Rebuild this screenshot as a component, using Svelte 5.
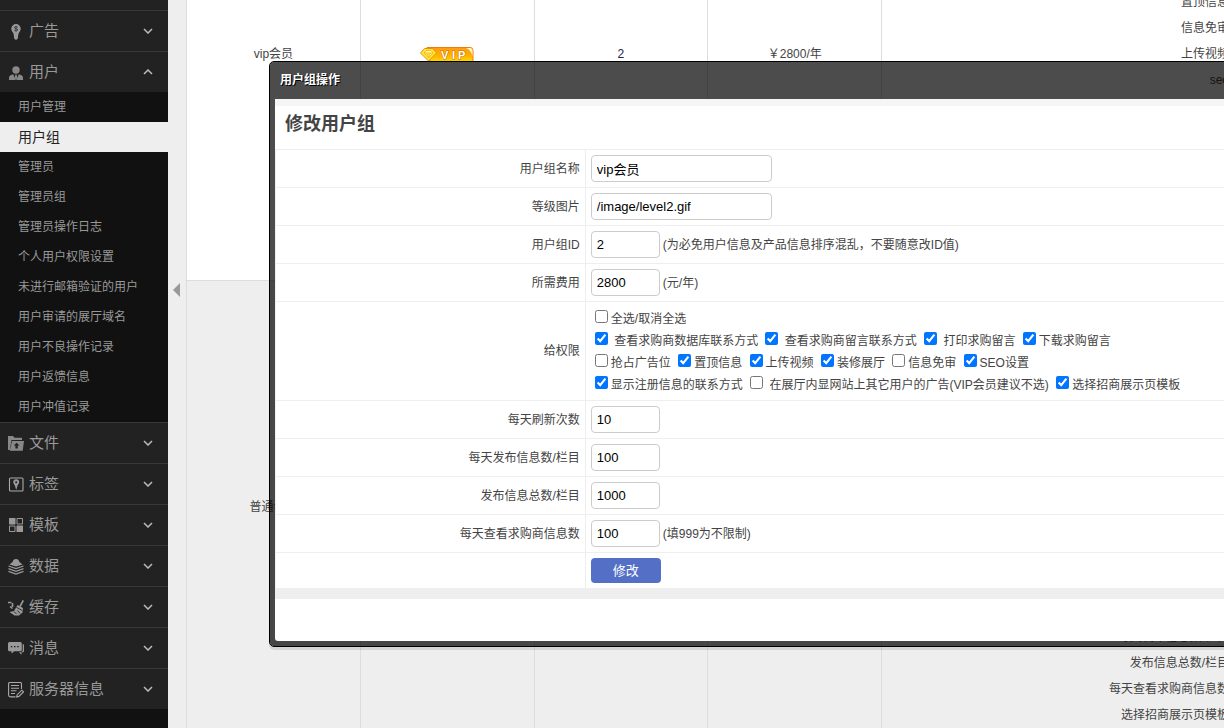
<script>
  const before = [{ name: '广告', icon: 'ad' }];
  const after = [
    { name: '文件', icon: 'file' },
    { name: '标签', icon: 'tag' },
    { name: '模板', icon: 'template' },
    { name: '数据', icon: 'data' },
    { name: '缓存', icon: 'cache' },
    { name: '消息', icon: 'message' },
    { name: '服务器信息', icon: 'server' }
  ];
  const userLinks = [
    '用户管理', '用户组', '管理员', '管理员组', '管理员操作日志', '个人用户权限设置',
    '未进行邮箱验证的用户', '用户审请的展厅域名', '用户不良操作记录', '用户返馈信息', '用户冲值记录'
  ];
  const activeLink = '用户组';

  const vipRights = ['置顶信息', '信息免审', '上传视频', 'seo', '装修展厅'];
  const basicRights = ['每天发布信息数/栏目', '发布信息总数/栏目', '每天查看求购商信息数', '选择招商展示页模板'];

  const topFields = [
    { id: 'groupname', label: '用户组名称', value: 'vip会员', wide: true, note: '' },
    { id: 'grouppic', label: '等级图片', value: '/image/level2.gif', wide: true, note: '' },
    { id: 'groupid', label: '用户组ID', value: '2', wide: false, note: '(为必免用户信息及产品信息排序混乱，不要随意改ID值)' },
    { id: 'rmb', label: '所需费用', value: '2800', wide: false, note: '(元/年)' }
  ];
  const bottomFields = [
    { id: 'refresh', label: '每天刷新次数', value: '10', wide: false, note: '' },
    { id: 'addinfo', label: '每天发布信息数/栏目', value: '100', wide: false, note: '' },
    { id: 'addtotal', label: '发布信息总数/栏目', value: '1000', wide: false, note: '' },
    { id: 'looked', label: '每天查看求购商信息数', value: '100', wide: false, note: '(填999为不限制)' }
  ];
  const rights = [
    [{ text: '全选/取消全选', on: false }],
    [
      { text: ' 查看求购商数据库联系方式', on: true },
      { text: ' 查看求购商留言联系方式', on: true },
      { text: ' 打印求购留言', on: true },
      { text: '下载求购留言', on: true }
    ],
    [
      { text: '抢占广告位', on: false },
      { text: '置顶信息', on: true },
      { text: '上传视频', on: true },
      { text: '装修展厅', on: true },
      { text: '信息免审', on: false },
      { text: 'SEO设置', on: true }
    ],
    [
      { text: '显示注册信息的联系方式', on: true },
      { text: ' 在展厅内显网站上其它用户的广告(VIP会员建议不选)', on: false },
      { text: '选择招商展示页模板', on: true }
    ]
  ];
</script>

{#snippet glyph(name)}
  <svg class="icon" viewBox="0 0 16 16" aria-hidden="true">
    {#if name === 'ad'}
      <path fill="#999" d="M8 0a4.700 4.700 0 0 0-4.700 4.700c0 2 1.300 3.200 2 4.600.6 1.500.7 3.500.8 5.200L8 16l1.900-1.500c.1-1.700.2-3.700.8-5.200.7-1.400 2-2.600 2-4.600A4.700 4.700 0 0 0 8 0z" />
      <path fill="none" stroke="#333" stroke-width=".9" d="M9.700 3.300C8.800 2.200 6.400 2.500 6.400 3.700c0 1.300 3.300.7 3.300 2.100 0 1.200-2.500 1.400-3.400.3M8 1.800v5.700" />
    {:else if name === 'user'}
      <circle cx="8" cy="5" r="3.700" fill="#888" />
      <path fill="#888" d="M1 15v-2.500c0-2 2.500-2.800 4.200-3.300L7.700 15zM15 15v-2.500c0-2-2.500-2.800-4.200-3.300L8.300 15z" />
      <path fill="#888" d="M7.300 9.500h1.400l.5 3.500L8 15l-1.200-2z" />
    {:else if name === 'file'}
      <path fill="#888" d="M0 0h5l1.500 1.700H14V4H3.500L1.800 14H0z" />
      <path fill="#888" d="M4 5h12l-1.300 9.700H1.800z" />
      <path fill="#222" d="M8.600 6.700l2.900 2.900H9.800v2.900H7.400V9.600H5.700z" />
    {:else if name === 'tag'}
      <rect x="1.500" y="1" width="13.500" height="13" rx="1" fill="none" stroke="#aaa" stroke-width="1.100" />
      <path fill="#999" d="M8.200 2.300a3 3 0 0 0-3 3c0 1.500 1.600 2.500 2 4.400l1 3.300 1-3.300c.4-1.900 2-2.900 2-4.400a3 3 0 0 0-3-3z" />
      <circle cx="8.200" cy="5.200" r="1" fill="#222" />
    {:else if name === 'template'}
      <path fill="#999" d="M1 0h6.500v6.500H1zM8.500 7.500H15V14H8.500z" />
      <path fill="none" stroke="#999" d="M9 .5h5.500V6H9zM1.500 8H7v5.500H1.500z" />
    {:else if name === 'data'}
      <path fill="#999" d="M8 0C5.800 0 4.800 1.500 4.800 2.700L1.500 5.500 8 7.600l6.500-2.100-3.300-2.800C11.200 1.500 10.200 0 8 0z" />
      <path fill="none" stroke="#999" stroke-width="1.300" d="M.5 7L8 9.600 15.500 7M.5 9.700L8 12.300l7.500-2.600M.5 12.400L8 15l7.500-2.600" />
    {:else if name === 'cache'}
      <path fill="none" stroke="#999" stroke-width="1.600" d="M15.300.3L12 6.500M0 2.500h3.500M4.500 3v4M2 6.500l2.500 2" />
      <path fill="#999" d="M9.500 5l5.500 3-.5 4.500L11 15.500H6.500L1.500 12l4.500-1z" />
      <path fill="none" stroke="#222" stroke-width=".9" d="M8.300 7.200l6 3.300M6 11.500l2.500 2.500M9.500 10.500l2.500 3" />
    {:else if name === 'message'}
      <path fill="#999" d="M1.500 1h10.800a1.500 1.500 0 0 1 1.500 1.500v6.300a1.500 1.500 0 0 1-1.500 1.500H6.300L3.500 12.500v-2.200h-2A1.500 1.500 0 0 1 0 8.800V2.500A1.500 1.500 0 0 1 1.500 1z" />
      <path fill="#999" d="M14.700 3c1 0 1.300.7 1.300 1.500v5.300c0 1-.5 1.500-1.500 1.500h-1v2.400l-2.500-2.400H8.500c4 0 6.200 0 6.200-2z" />
      <path fill="#222" d="M2.800 5h1.500v1.300H2.800zM6 5h1.500v1.300H6zM9.200 5h1.500v1.300H9.200z" />
    {:else}
      <path fill="none" stroke="#aaa" stroke-width="1.100" d="M13.500 7V1.800A1.300 1.300 0 0 0 12.200.5H1.900A1.300 1.300 0 0 0 .6 1.800V13a1.900 1.900 0 0 0 1.900 1.900h5M3 3.500h8M3 6.200h8M3 8.800h5.500M3 11.500h4M8.700 14.900l.5-2.200 4.600-4.500 1.700 1.700-4.600 4.500z" />
    {/if}
  </svg>
{/snippet}

{#snippet menuHead(item, open)}
  <button class="head" type="button" aria-expanded={open}>
    {@render glyph(item.icon)}
    <span>{item.name}</span>
    <svg class="chevron" viewBox="0 0 10 6" aria-hidden="true">
      <path d={open ? 'M1 5l4-4 4 4' : 'M1 1l4 4 4-4'} />
    </svg>
  </button>
{/snippet}

{#snippet fieldRow(field)}
  <tr>
    <th scope="row"><label for={field.id}>{field.label}</label></th>
    <td>
      <div class="field">
        <input id={field.id} class="text" class:wide={field.wide} type="text" value={field.value} />
        {#if field.note}<span>{field.note}</span>{/if}
      </div>
    </td>
  </tr>
{/snippet}

<div class="page">
  <nav class="side">
    <div class="edge"></div>
    {#each before as item}{@render menuHead(item, false)}{/each}
    {@render menuHead({ name: '用户', icon: 'user' }, true)}
    <ul>
      {#each userLinks as link}
        <li><a href="#top" class:active={link === activeLink}>{link}</a></li>
      {/each}
    </ul>
    {#each after as item}{@render menuHead(item, false)}{/each}
  </nav>

  <button class="fold" type="button" aria-label="收起菜单"><i></i></button>

  <main>
    <table class="groups">
      <tbody>
        <tr>
          <td>vip会员</td>
          <td>
            <svg class="badge" viewBox="0 0 54 15" role="img" aria-label="VIP">
              <defs>
                <linearGradient id="gold" x1="0" y1="0" x2="0" y2="1">
                  <stop offset="0" stop-color="#ff9a10" />
                  <stop offset=".5" stop-color="#ffae00" />
                  <stop offset="1" stop-color="#ffd800" />
                </linearGradient>
              </defs>
              <path d="M7 .5h43a3 3 0 0 1 3 3v11H10z" fill="url(#gold)" stroke="#ee7d10" />
              <path d="M46 1h4a2.500 2.500 0 0 1 2.500 2.500V9C51.500 5 49.500 2.500 46 1z" fill="#fff6d0" />
              <path d="M4.500 1.500h8l4 4.500-8 8-8-8z" fill="#ffe838" stroke="#f08a18" />
              <path d="M4 6l2-2.500h5L13 6l-4.500 5zM4 6h9M6.500 6l2 4 2-4" fill="#fffbb0" stroke="#f3b500" stroke-width=".8" />
              <text x="21" y="12">V</text><text x="32" y="12">I</text><text x="38" y="12">P</text>
            </svg>
          </td>
          <td class="link">2</td>
          <td>￥2800/年</td>
          <td class="rights">{#each vipRights as r}<div>{r}</div>{/each}</td>
        </tr>
        <tr class="alt">
          <td>普通会员</td>
          <td></td>
          <td></td>
          <td></td>
          <td class="rights end">{#each basicRights as r}<div>{r}</div>{/each}</td>
        </tr>
      </tbody>
    </table>
  </main>

  <section class="dialog" aria-label="用户组操作">
    <div class="bar">用户组操作</div>
    <div class="body">
      <h1>修改用户组</h1>
      <form onsubmit={(e) => e.preventDefault()}>
        <table class="form">
          <tbody>
            {#each topFields as field}{@render fieldRow(field)}{/each}
            <tr>
              <th scope="row">给权限</th>
              <td>
                {#each rights as line}
                  <div class="checks">
                    {#each line as box}<label><input type="checkbox" checked={box.on} />{box.text}</label>{' '}{/each}
                  </div>
                {/each}
              </td>
            </tr>
            {#each bottomFields as field}{@render fieldRow(field)}{/each}
            <tr>
              <th></th>
              <td><button class="submit" type="submit">修改</button></td>
            </tr>
          </tbody>
        </table>
      </form>
    </div>
  </section>
</div>

<style>
  :global(body) {
    background: #eee;
  }
  .page {
    position: relative;
    display: flex;
    height: 100vh;
    overflow: hidden;
    font: 12px/26px "Liberation Sans", "Noto Sans CJK SC", sans-serif;
    color: #444;
  }
  * {
    box-sizing: border-box;
  }
  button,
  input {
    font-family: inherit;
  }

  .side {
    flex: 0 0 168px;
    background: #111;
    overflow: hidden;
  }
  .edge {
    height: 10px;
    background: #222;
  }
  .head {
    display: flex;
    align-items: center;
    gap: 5px;
    width: 100%;
    height: 41px;
    padding: 0 15px 0 8px;
    border: 0;
    border-top: 1px solid #383838;
    background: #222;
    color: #999;
    font-size: 15px;
    line-height: 24px;
    text-align: left;
  }
  .icon {
    width: 16px;
    height: 16px;
    margin-top: 2px;
  }
  .chevron {
    width: 10px;
    height: 6px;
    margin-left: auto;
    fill: none;
    stroke: #bbb;
    stroke-width: 1.5;
  }
  ul {
    margin: 0;
    padding: 0;
    list-style: none;
  }
  li a {
    display: block;
    height: 30px;
    padding-left: 18px;
    line-height: 30px;
    color: #999;
    text-decoration: none;
    white-space: nowrap;
  }
  li a.active {
    background: #eee;
    color: #222;
    font-size: 14px;
  }

  .fold {
    display: flex;
    flex: 0 0 18px;
    align-items: flex-start;
    justify-content: flex-start;
    padding: 283px 0 0 5px;
    border: 0;
    background: #eee;
  }
  .fold i {
    border: 7px solid transparent;
    border-right-color: #999;
    border-left: 0;
  }

  main {
    flex: 1;
    min-width: 0;
  }
  .groups {
    width: 100%;
    margin-top: -173px;
    border-collapse: collapse;
    table-layout: fixed;
    background: #fff;
  }
  .groups tr {
    height: 453px;
  }
  .groups td {
    padding: 5px 0;
    border: 1px solid #ddd;
    text-align: center;
    vertical-align: middle;
  }
  .groups td:not(.rights) {
    width: 16.75%;
  }
  .groups .alt {
    background: #eee;
  }
  .groups .link {
    color: #225;
  }
  .groups .rights {
    border-right: 0;
    text-align: right;
    white-space: nowrap;
  }
  .groups .rights div {
    margin-right: -5px;
  }
  .groups .end {
    vertical-align: bottom;
  }
  .badge {
    display: block;
    width: 54px;
    height: 15px;
    margin: 0 auto;
  }
  .badge text {
    font: bold 11px "Liberation Sans", sans-serif;
    fill: #fff;
    stroke: #c96b00;
    stroke-width: 1;
    paint-order: stroke;
  }

  .dialog {
    position: absolute;
    top: 61px;
    left: 269px;
    width: 86vw;
    padding: 0 5px 5px;
    border: 1px solid #000;
    border-radius: 5px;
    box-shadow: 0 3px 0 rgba(0, 0, 0, 0.1);
    overflow: hidden;
  }
  .bar {
    height: 37px;
    margin: 0 -5px;
    padding-left: 10px;
    background: rgba(0, 0, 0, 0.7);
    color: #fff;
    font-weight: bold;
    line-height: 36px;
    text-shadow: 1px 1px 0 #000;
  }
  .body {
    height: 542px;
    border-top: 7px solid #f5f5f5;
    border-radius: 0 0 3px 3px;
    background: #fff;
    box-shadow: 0 0 0 9px rgba(0, 0, 0, 0.7);
    clip-path: inset(0 -5px -5px -5px);
  }
  h1 {
    height: 43px;
    margin: 0;
    padding-left: 10px;
    font-size: 18px;
    line-height: 36px;
  }
  form {
    border-bottom: 11px solid #eee;
  }
  .form {
    width: 100%;
    border-spacing: 0;
    border-left: 1px solid #eee;
  }
  .form th,
  .form td {
    padding: 5px;
    border-top: 1px solid #eee;
    font-weight: normal;
  }
  .form th {
    width: 29.8%;
    border-right: 1px solid #eee;
    text-align: right;
  }
  .field {
    display: flex;
    align-items: center;
    gap: 3px;
    height: 27px;
  }
  .text {
    width: 69px;
    height: 27px;
    padding: 0 5px;
    border: 1px solid #ccc;
    border-radius: 4px;
    background: #fff;
    color: #000;
    font-size: 13px;
  }
  .text.wide {
    width: 181px;
  }
  .checks {
    height: 22px;
    line-height: 24px;
    white-space: nowrap;
  }
  .checks input {
    width: 13px;
    height: 13px;
    margin: 3px 3px 3px 4px;
    vertical-align: baseline;
  }
  .submit {
    display: block;
    width: 70px;
    height: 25px;
    padding: 0;
    border: 0;
    border-radius: 4px;
    background: #5470c6;
    color: #fff;
    font-size: 13px;
    line-height: 25px;
  }
</style>
